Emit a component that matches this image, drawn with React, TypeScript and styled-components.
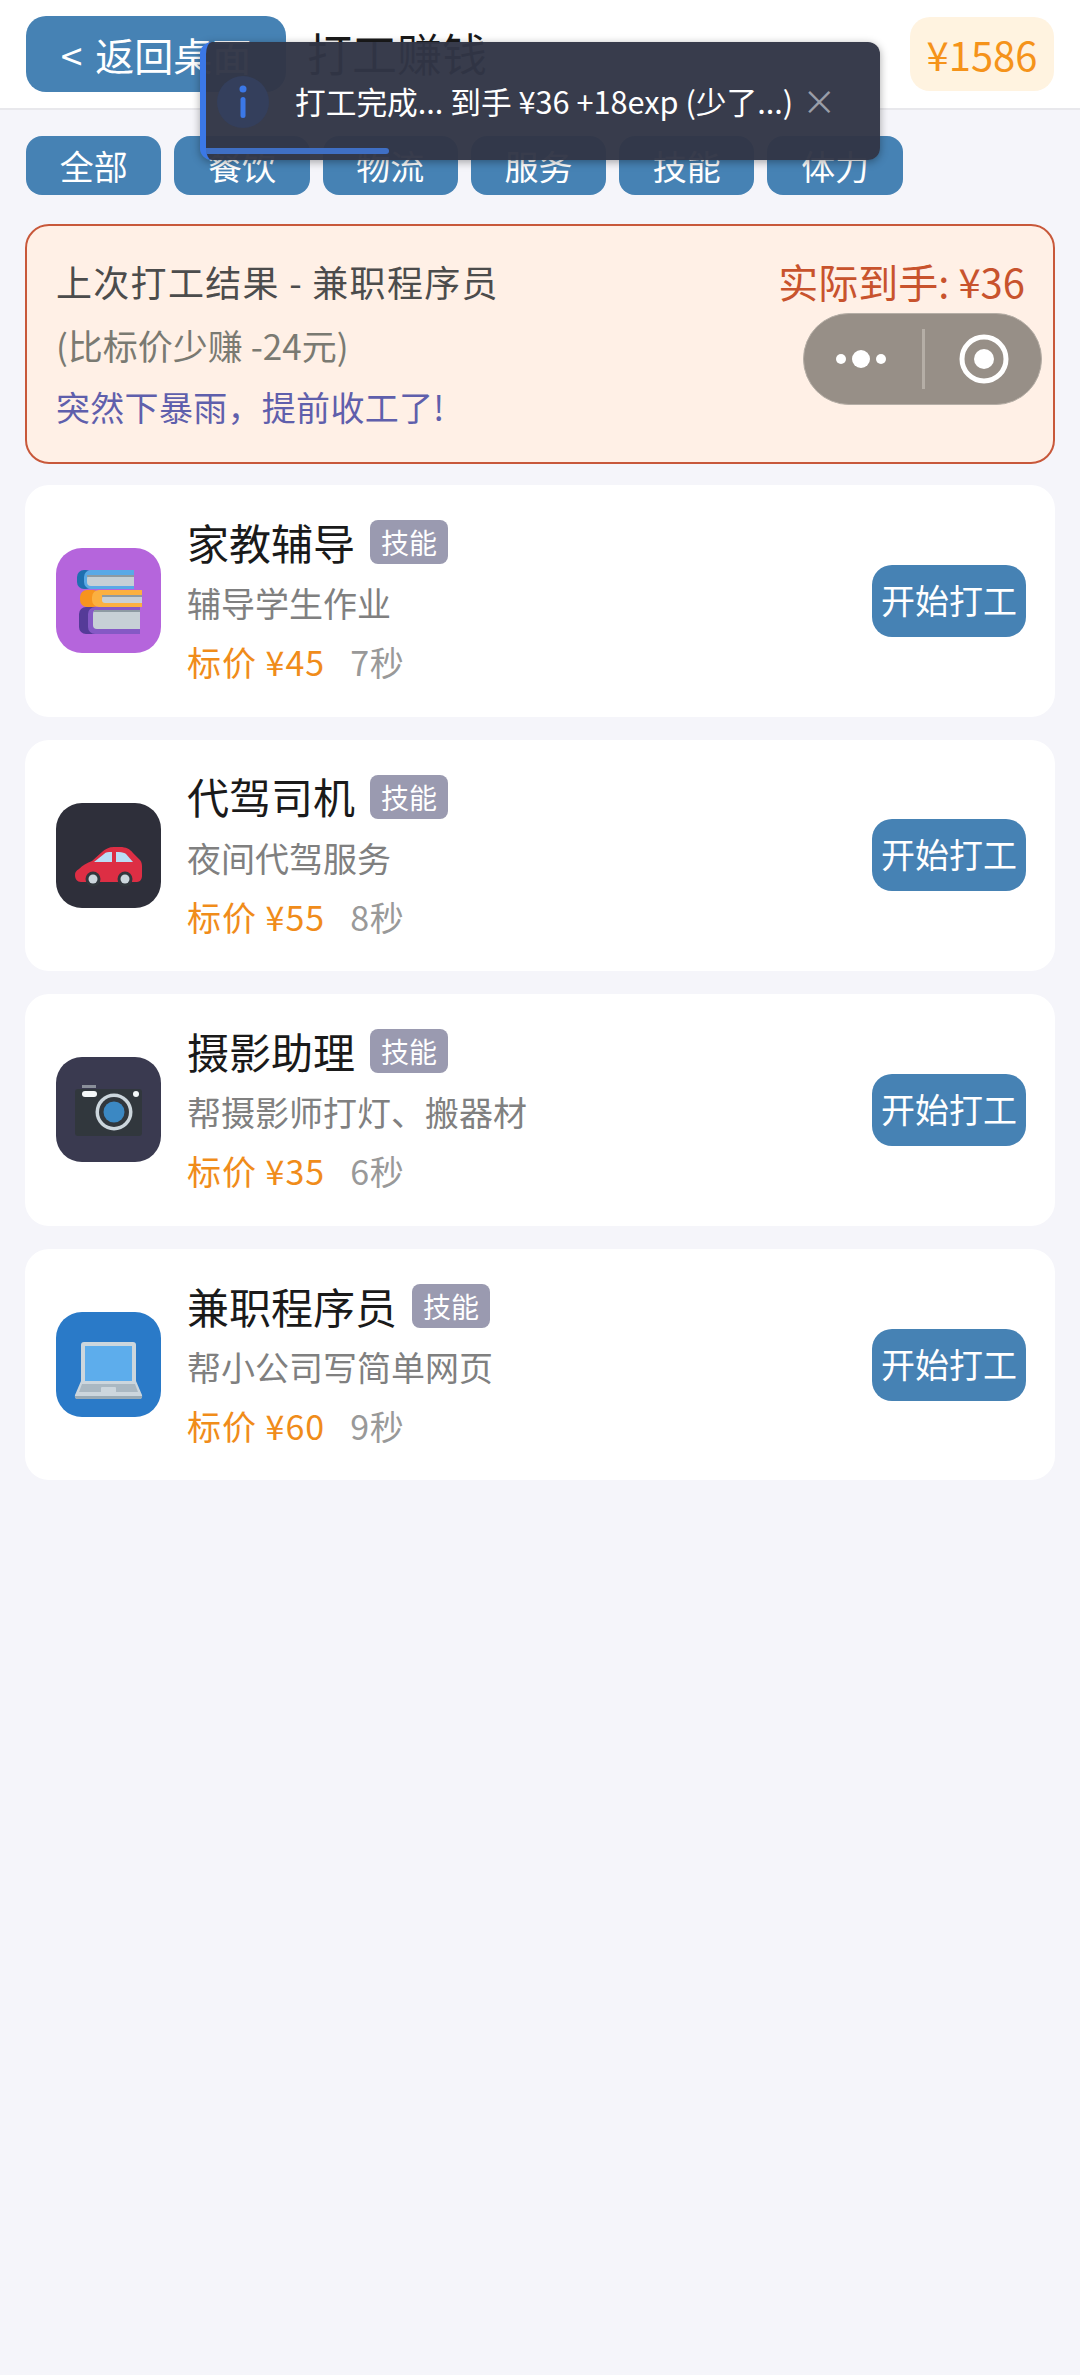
import React from "react";
import styled, { createGlobalStyle } from "styled-components";

const Global = createGlobalStyle`
  html, body { margin: 0; padding: 0; background: #f5f5fa; }
  body { font-family: "Noto Sans CJK SC", "Noto Sans", sans-serif; }
  * { box-sizing: border-box; }
`;

const Page = styled.div`
  position: relative;
  width: 1080px;
  height: 2375px;
  overflow: hidden;
  background: #f5f5fa;
`;

const Header = styled.header`
  display: flex;
  align-items: center;
  height: 110px;
  padding: 0 26px;
  background: #fff;
  border-bottom: 2px solid #e8e8ec;
`;

const BackButton = styled.div`
  width: 260px;
  height: 76px;
  display: flex;
  align-items: center;
  justify-content: center;
  background: #4682b4;
  color: #fff;
  font-size: 39px;
  border-radius: 20px;
  white-space: nowrap;
  word-spacing: 4px;
`;

const Title = styled.h1`
  margin: -3px 0 0 21px;
  font-size: 45px;
  font-weight: 400;
  color: #1a1a1a;
  flex: 1;
`;

const Balance = styled.div`
  width: 144px;
  height: 74px;
  display: flex;
  align-items: center;
  justify-content: center;
  background: #fff3e0;
  color: #f5931a;
  border-radius: 20px;
  font-size: 40px;
`;

const Tabs = styled.nav`
  display: flex;
  gap: 13px;
  padding: 26px 26px 0;
`;

const Tab = styled.div`
  width: 135.300px;
  height: 59px;
  display: flex;
  align-items: center;
  justify-content: center;
  background: #4682b4;
  color: #fff;
  border-radius: 16px;
  font-size: 34px;
`;

const ResultCard = styled.section`
  display: flex;
  justify-content: space-between;
  margin: 29px 25px 0;
  height: 240px;
  padding: 24px 28px 0 29px;
  background: #fff0e6;
  border: 2px solid #c8583a;
  border-radius: 24px;
`;

const ResultLeft = styled.div`
  display: flex;
  flex-direction: column;
`;

const ResultTitle = styled.div`
  font-size: 36px;
  letter-spacing: 1.300px;
  line-height: 62px;
  color: #4c4c4c;
`;

const ResultDiff = styled.div`
  font-size: 35px;
  line-height: 66px;
  color: #7a7a72;
`;

const ResultEvent = styled.div`
  font-size: 34px;
  letter-spacing: 0.300px;
  line-height: 57px;
  color: #5f5fac;
`;

const ResultAmount = styled.div`
  font-size: 40px;
  line-height: 62px;
  color: #c8532d;
`;

const JobList = styled.div`
  display: flex;
  flex-direction: column;
  gap: 23px;
  margin: 21px 25px 0;
`;

const JobCard = styled.article`
  display: flex;
  align-items: center;
  height: 231.600px;
  padding: 0 29px 0 31px;
  background: #fff;
  border-radius: 24px;
`;

const IconBox = styled.div<{ $bg: string }>`
  width: 105px;
  height: 105px;
  flex: none;
  border-radius: 26px;
  background: ${(p) => p.$bg};
  overflow: hidden;
  svg { display: block; }
`;

const JobBody = styled.div`
  flex: 1;
  margin-left: 26px;
  display: flex;
  flex-direction: column;
`;

const NameRow = styled.div`
  display: flex;
  align-items: center;
  gap: 15px;
  height: 62px;
`;

const JobName = styled.div`
  font-size: 42px;
  color: #1a1a1a;
  margin-top: -2px;
`;

const Tag = styled.span`
  width: 78px;
  height: 44px;
  display: flex;
  align-items: center;
  justify-content: center;
  background: #9a9ab0;
  color: #fff;
  font-size: 28px;
  border-radius: 8px;
`;

const JobDesc = styled.div`
  font-size: 34px;
  line-height: 60px;
  color: #808080;
`;

const MetaRow = styled.div`
  display: flex;
  gap: 25px;
  font-size: 34px;
  line-height: 57px;
`;

const Price = styled.span`
  color: #f08c1a;
  letter-spacing: 1px;
`;

const Duration = styled.span`
  color: #999;
  letter-spacing: 0.500px;
`;

const StartButton = styled.div`
  width: 154px;
  height: 72px;
  display: flex;
  align-items: center;
  justify-content: center;
  background: #4682b4;
  color: #fff;
  font-size: 34px;
  border-radius: 20px;
  white-space: nowrap;
  padding-bottom: 3px;
`;

const Toast = styled.div`
  position: absolute;
  left: 200px;
  top: 42px;
  width: 680px;
  height: 118px;
  display: flex;
  align-items: flex-start;
  padding: 34px 0 0 11px;
  background: rgba(50, 54, 70, 0.97);
  border-left: 6px solid #3b78e7;
  border-radius: 12px;
  color: #fff;
  box-shadow: 0 2px 8px rgba(0, 0, 0, 0.35);
`;

const ToastIcon = styled.div`
  width: 52px;
  height: 52px;
  flex: none;
  border-radius: 50%;
  background: #343f5c;
  display: flex;
  align-items: center;
  justify-content: center;
`;

const ToastText = styled.div`
  margin-left: 26px;
  font-size: 30.700px;
  line-height: 50px;
  white-space: nowrap;
`;

const ToastClose = styled.div`
  margin-left: 9px;
  line-height: 50px;
  font-size: 34px;
  color: #9a9ea8;
`;

const ToastProgress = styled.div`
  position: absolute;
  left: 0;
  bottom: 6px;
  width: 183px;
  height: 6px;
  background: #3f6fc4;
  border-radius: 0 3px 3px 0;
`;

const Capsule = styled.div`
  position: absolute;
  left: 803px;
  top: 313px;
  width: 239px;
  height: 92px;
  border-radius: 46px;
  background: #978f87;
  border: 1px solid #b5aea6;
`;

const BooksIcon = () => (
  <svg width="105" height="105" viewBox="0 0 105 105">
    <rect x="21" y="22" width="16" height="19" rx="7" fill="#1f6fb0" />
    <path d="M35 22h43v19H35a7 7 0 0 1-7-7v-5a7 7 0 0 1 7-7z" fill="#5aa9e6" />
    <path d="M35 27h43v11H35a4 4 0 0 1-4-4v-3a4 4 0 0 1 4-4z" fill="#c7d0d6" />
    <rect x="31" y="27" width="47" height="2" fill="#8d9aa3" />
    <rect x="24" y="42" width="20" height="17" rx="7" fill="#f7941d" />
    <path d="M43 42h43v17H43a7 7 0 0 1-7-7v-3a7 7 0 0 1 7-7z" fill="#fbb040" />
    <path d="M49 48h37v7H49a3 3 0 0 1-3-3v-1a3 3 0 0 1 3-3z" fill="#c7d0d6" />
    <rect x="46" y="47" width="40" height="2" fill="#8d9aa3" />
    <path d="M40 59h-10a7 7 0 0 0-7 7v13a7 7 0 0 0 7 7h10z" fill="#553b98" />
    <path d="M39 59h45v27H39a7 7 0 0 1-7-7V66a7 7 0 0 1 7-7z" fill="#8559c5" />
    <path d="M41 62h43v19H41a4 4 0 0 1-4-4V66a4 4 0 0 1 4-4z" fill="#c7d0d6" />
    <rect x="38" y="62" width="46" height="2" fill="#8d9aa3" />
  </svg>
);

const CarIcon = () => (
  <svg width="105" height="105" viewBox="0 0 105 105">
    <path d="M19 72c0-3 1-4 4-6 4-4 8-6 13-8l10-9c3-3 7-5 12-5h6c6 0 10 2 13 6l7 7c2 2 2 5 2 8v8c0 3-2 6-5 6H25c-4 0-6-3-6-7z" fill="#dd2e44" />
    <path d="M38 59l10-8c2-2 4-2 8-2v10z" fill="#bbddf5" />
    <path d="M60 49h3c3 0 6 1 7 2l7 8H60z" fill="#bbddf5" />
    <circle cx="37" cy="76" r="7.500" fill="#31373d" />
    <circle cx="37" cy="76" r="4.500" fill="#ccd6dd" />
    <circle cx="69" cy="76" r="7.500" fill="#31373d" />
    <circle cx="69" cy="76" r="4.500" fill="#ccd6dd" />
  </svg>
);

const CameraIcon = () => (
  <svg width="105" height="105" viewBox="0 0 105 105">
    <rect x="26" y="28" width="14" height="3" fill="#8a8f9a" />
    <rect x="19" y="32" width="67" height="47" rx="3" fill="#31373d" />
    <rect x="26" y="34" width="15" height="6" rx="3" fill="#f5f8fa" />
    <circle cx="80" cy="37" r="3" fill="#f5f8fa" />
    <circle cx="58" cy="55" r="18.500" fill="#ccd6dd" />
    <circle cx="58" cy="55" r="15" fill="#31373d" />
    <circle cx="58" cy="55" r="10.500" fill="#3b88c3" />
  </svg>
);

const LaptopIcon = () => (
  <svg width="105" height="105" viewBox="0 0 105 105">
    <path d="M28 30h49a3 3 0 0 1 3 3v36H25V33a3 3 0 0 1 3-3z" fill="#ccd6dd" />
    <rect x="29" y="34" width="47" height="35" fill="#5dadec" />
    <path d="M25 69h55l6 14a3 3 0 0 1-3 4H22a3 3 0 0 1-3-4z" fill="#ccd6dd" />
    <path d="M26 72h53l3 8H23z" fill="#aab8c2" />
    <rect x="45" y="75" width="15" height="6" rx="1" fill="#ccd6dd" />
    <path d="M19 84h67v1a2 2 0 0 1-2 2H21a2 2 0 0 1-2-2z" fill="#99aab5" />
  </svg>
);

const jobs = [
  { name: "家教辅导", desc: "辅导学生作业", price: 45, time: 7, bg: "#b565dc", icon: <BooksIcon /> },
  { name: "代驾司机", desc: "夜间代驾服务", price: 55, time: 8, bg: "#2e2f3a", icon: <CarIcon /> },
  { name: "摄影助理", desc: "帮摄影师打灯、搬器材", price: 35, time: 6, bg: "#3a3a50", icon: <CameraIcon /> },
  { name: "兼职程序员", desc: "帮小公司写简单网页", price: 60, time: 9, bg: "#2a7ac8", icon: <LaptopIcon /> },
];

export default function App() {
  return (
    <Page>
      <Global />
      <Header>
        <BackButton>&lt; 返回桌面</BackButton>
        <Title>打工赚钱</Title>
        <Balance>¥1586</Balance>
      </Header>
      <Tabs>
        {["全部", "餐饮", "物流", "服务", "技能", "体力"].map((t) => (
          <Tab key={t}>{t}</Tab>
        ))}
      </Tabs>
      <ResultCard>
        <ResultLeft>
          <ResultTitle>上次打工结果 - 兼职程序员</ResultTitle>
          <ResultDiff>(比标价少赚 -24元)</ResultDiff>
          <ResultEvent>突然下暴雨，提前收工了!</ResultEvent>
        </ResultLeft>
        <ResultAmount>实际到手: ¥36</ResultAmount>
      </ResultCard>
      <JobList>
        {jobs.map((j) => (
          <JobCard key={j.name}>
            <IconBox $bg={j.bg}>{j.icon}</IconBox>
            <JobBody>
              <NameRow>
                <JobName>{j.name}</JobName>
                <Tag>技能</Tag>
              </NameRow>
              <JobDesc>{j.desc}</JobDesc>
              <MetaRow>
                <Price>标价 ¥{j.price}</Price>
                <Duration>{j.time}秒</Duration>
              </MetaRow>
            </JobBody>
            <StartButton>开始打工</StartButton>
          </JobCard>
        ))}
      </JobList>
      <Toast>
        <ToastIcon>
          <svg width="10" height="36" viewBox="0 0 10 36">
            <circle cx="5" cy="5" r="3.500" fill="#3b78e7" />
            <rect x="2.500" y="13" width="5" height="21" rx="2.500" fill="#3b78e7" />
          </svg>
        </ToastIcon>
        <ToastText>打工完成... 到手 ¥36 +18exp (少了...)</ToastText>
        <ToastClose>×</ToastClose>
        <ToastProgress />
      </Toast>
      <Capsule>
        <svg width="237" height="90" viewBox="0 0 237 90">
          <circle cx="37" cy="45" r="5" fill="#fff" />
          <circle cx="57" cy="45" r="9" fill="#fff" />
          <circle cx="77" cy="45" r="5" fill="#fff" />
          <rect x="118" y="15" width="3" height="60" fill="#b5aea6" />
          <circle cx="180" cy="45" r="22" fill="none" stroke="#fff" strokeWidth="5" />
          <circle cx="180" cy="45" r="10" fill="#fff" />
        </svg>
      </Capsule>
    </Page>
  );
}
